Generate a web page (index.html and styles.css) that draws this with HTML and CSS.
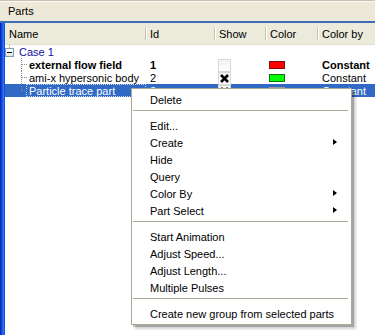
FILE: index.html
```html
<!DOCTYPE html>
<html>
<head>
<meta charset="utf-8">
<link rel="stylesheet" href="styles.css">
</head>
<body>
<div class="titlebar">Parts</div>
<div class="frame">
  <div class="edge"></div>
  <div class="list">
    <div class="header">
      <div class="hcell first">Name</div>
      <div class="hcell">Id</div>
      <div class="hcell">Show</div>
      <div class="hcell">Color</div>
      <div class="hcell">Color by</div>
    </div>
    <div class="rows">
      <div class="row">
        <div class="cell name root"><span class="expander"><span class="minus"></span></span><span class="root-label">Case 1</span></div>
        <div class="cell"></div><div class="cell"></div><div class="cell"></div><div class="cell"></div>
      </div>
      <div class="row bold">
        <div class="cell name child">external flow field</div>
        <div class="cell id">1</div>
        <div class="cell show"><span class="check"></span></div>
        <div class="cell color"><span class="swatch red"></span></div>
        <div class="cell by">Constant</div>
      </div>
      <div class="row">
        <div class="cell name child">ami-x hypersonic body</div>
        <div class="cell id">2</div>
        <div class="cell show"><span class="check"><svg width="11" height="11" viewBox="0 0 11 11"><path d="M2 2 L9 9 M9 2 L2 9" stroke="#000" stroke-width="2.6"/></svg></span></div>
        <div class="cell color"><span class="swatch green"></span></div>
        <div class="cell by">Constant</div>
      </div>
      <div class="row selected">
        <div class="cell name child last"><span class="focus">Particle trace part</span></div>
        <div class="cell id">3</div>
        <div class="cell show"><span class="check"><svg width="11" height="11" viewBox="0 0 11 11"><path d="M2 2 L9 9 M9 2 L2 9" stroke="#000" stroke-width="2.6"/></svg></span></div>
        <div class="cell color"><span class="swatch grey"></span></div>
        <div class="cell by">Constant</div>
      </div>
    </div>
  </div>
</div>

<div class="menu">
  <div class="item">Delete</div>
  <div class="sep"></div>
  <div class="item">Edit...</div>
  <div class="item sub">Create</div>
  <div class="item">Hide</div>
  <div class="item">Query</div>
  <div class="item sub">Color By</div>
  <div class="item sub">Part Select</div>
  <div class="sep"></div>
  <div class="item">Start Animation</div>
  <div class="item">Adjust Speed...</div>
  <div class="item">Adjust Length...</div>
  <div class="item">Multiple Pulses</div>
  <div class="sep"></div>
  <div class="item">Create new group from selected parts</div>
</div>
</body>
</html>
```

FILE: styles.css
```css
html, body {
  margin: 0;
  padding: 0;
}
body {
  width: 375px;
  height: 335px;
  overflow: hidden;
  position: relative;
  background: #fff;
  font-family: "Liberation Sans", Arial, sans-serif;
  font-size: 11px;
  color: #000;
}

.titlebar {
  height: 20px;
  line-height: 21px;
  background: #ece9d8;
  border-top: 1px solid #c4c1b0;
  box-shadow: inset 0 1px #fbfaf6;
  padding-left: 8px;
}

.frame {
  display: flex;
  border-top: 2px solid #3e6bb6;
  height: 312px;
}
.edge {
  width: 5px;
  flex: none;
  background: linear-gradient(to right, #0a2bb8 0, #0a2bb8 1px, #0b3fd8 1px, #0b3fd8 2px, #1a5cec 2px, #1a5cec 3px, #2a74f4 3px, #2a74f4 4px, #1050e4 4px);
}
.list {
  flex: 1;
  display: flex;
  flex-direction: column;
}

.header {
  display: grid;
  grid-template-columns: 140px 69px 51px 52px 1fr;
  height: 21px;
  background: #ebeadb;
  border-bottom: 1px solid #e2dfcf;
}
.hcell {
  position: relative;
  line-height: 22px;
  padding-left: 5px;
  white-space: nowrap;
}
.hcell.first {
  padding-left: 4px;
}
.hcell:not(.first)::before {
  content: "";
  position: absolute;
  left: 0;
  top: 4px;
  height: 13px;
  width: 1px;
  background: #c7c5b2;
  box-shadow: 1px 0 #fff;
}

.rows {
  display: flex;
  flex-direction: column;
}
.row {
  display: grid;
  grid-template-columns: 140px 69px 51px 52px 1fr;
  height: 13px;
  line-height: 14px;
  white-space: nowrap;
}
.row.bold {
  font-weight: bold;
}
.row.selected {
  background: #316ac5;
  color: #fff;
}
.cell {
  position: relative;
  padding-left: 5px;
}
.cell.show, .cell.color {
  padding-left: 4px;
  display: flex;
  align-items: center;
}
.cell.name.root {
  padding-left: 0;
  display: flex;
  align-items: center;
}
.expander {
  width: 9px;
  height: 9px;
  margin-left: 0;
  margin-right: 5px;
  box-sizing: border-box;
  border: 1px solid #7f9db9;
  background: linear-gradient(#fff, #e6e4da);
  position: relative;
  display: flex;
  align-items: center;
  justify-content: center;
}
.expander::before {
  content: "";
  position: absolute;
  left: 3px;
  top: -4px;
  height: 3px;
  border-left: 1px dotted #a0a0a0;
}
.minus {
  width: 5px;
  height: 1px;
  background: #000;
}
.root-label {
  color: #1010a0;
}
.cell.name.child {
  padding-left: 24px;
}
.cell.name.child::before {
  content: "";
  position: absolute;
  left: 16px;
  top: 0;
  height: 13px;
  border-left: 1px dotted #8a8a8a;
}
.cell.name.child.last::before {
  height: 7px;
}
.cell.name.child::after {
  content: "";
  position: absolute;
  left: 17px;
  top: 6px;
  width: 5px;
  border-top: 1px dotted #8a8a8a;
}
.focus {
  display: inline-block;
  margin-left: -3px;
  padding-left: 2px;
  width: 116px;
  height: 11px;
  line-height: 12px;
  border: 1px dotted #c8d6ee;
}

.check {
  width: 13px;
  height: 13px;
  box-sizing: border-box;
  border: 1px solid #d8d8d8;
  background: linear-gradient(#f2f2f2, #fff);
  display: flex;
  align-items: center;
  justify-content: center;
}
.swatch {
  width: 16px;
  height: 8px;
  box-sizing: border-box;
  border: 1px solid #5a5a5a;
}
.swatch.red { background: #ff0000; border-color: #7a1010; }
.swatch.green { background: #00ff00; border-color: #1a6a1a; }
.swatch.grey { background: #d8d8d8; border-color: #9a9a9a; }

.menu {
  position: absolute;
  left: 131px;
  top: 88px;
  width: 219px;
  background: #fff;
  border: 1px solid #aca899;
  padding: 2px 0;
  box-shadow: 2px 2px 0 rgba(0,0,0,0.22), 4px 4px 2px rgba(0,0,0,0.18);
}
.item {
  position: relative;
  height: 17px;
  line-height: 19px;
  padding-left: 18px;
  white-space: nowrap;
}
.item.sub::after {
  content: "";
  position: absolute;
  right: 14px;
  top: 5px;
  border-left: 4px solid #000;
  border-top: 3.5px solid transparent;
  border-bottom: 3.5px solid transparent;
}
.sep {
  height: 9px;
  position: relative;
}
.sep::before {
  content: "";
  position: absolute;
  left: 1px;
  right: 3px;
  top: 2px;
  border-top: 1px solid #aca899;
}
```
